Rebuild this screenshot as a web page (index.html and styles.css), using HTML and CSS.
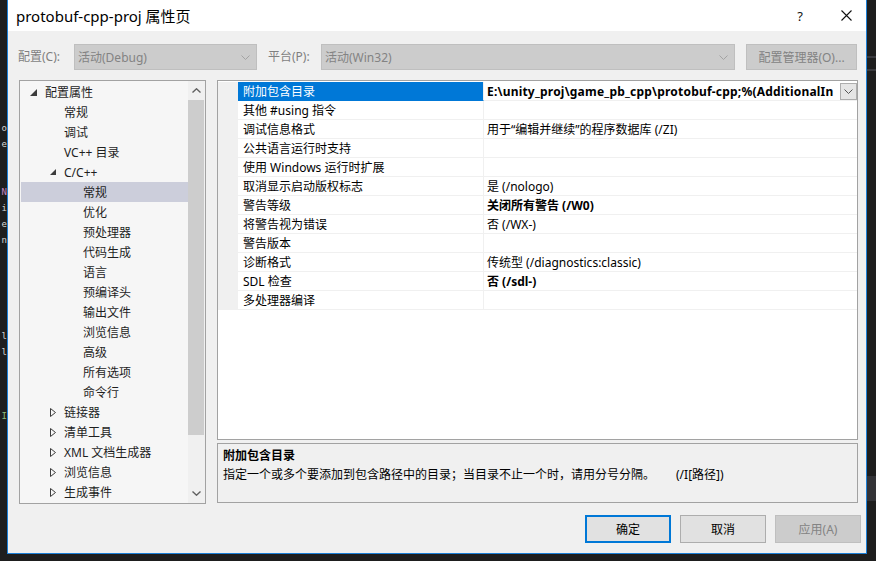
FILE: index.html
```html
<!DOCTYPE html>
<html lang="zh-CN">
<head>
<meta charset="utf-8">
<title>protobuf-cpp-proj 属性页</title>
<link rel="stylesheet" href="styles.css">
</head>
<body>
<div class="desk">
  <div class="code-strip">
    <div class="cl"></div><div class="cl"></div><div class="cl"></div><div class="cl"></div>
    <div class="cl"></div><div class="cl"></div><div class="cl"></div>
    <div class="cl"><span>o</span></div>
    <div class="cl"><span>e</span></div>
    <div class="cl"></div><div class="cl"></div>
    <div class="cl kw"><span>N</span></div>
    <div class="cl"><span>i</span></div>
    <div class="cl"><span>e</span></div>
    <div class="cl"><span>n</span></div>
    <div class="cl"></div><div class="cl"></div><div class="cl"></div><div class="cl"></div><div class="cl"></div>
    <div class="cl"><span>l</span></div>
    <div class="cl"><span>l</span></div>
    <div class="cl"></div><div class="cl"></div><div class="cl"></div>
    <div class="cl cm"><span>I</span></div>
  </div>

  <div class="window">
    <div class="titlebar">
      <div class="title">protobuf-cpp-proj 属性页</div>
      <div class="tb-help">?</div>
      <div class="tb-close">
        <svg width="11" height="11" viewBox="0 0 11 11"><path d="M0.5 0.5 L10.5 10.5 M10.5 0.5 L0.5 10.5" stroke="#111" stroke-width="1.1" fill="none"/></svg>
      </div>
    </div>

    <div class="client">
      <div class="toolbar">
        <div class="lbl lbl1">配置(C):</div>
        <div class="combo combo1"><span>活动(Debug)</span>
          <svg class="chev" width="9" height="5" viewBox="0 0 9 5"><path d="M0.5 0.5 L4.5 4.5 L8.5 0.5" stroke="#a3a3a3" fill="none"/></svg>
        </div>
        <div class="lbl lbl2">平台(P):</div>
        <div class="combo combo2"><span>活动(Win32)</span>
          <svg class="chev" width="9" height="5" viewBox="0 0 9 5"><path d="M0.5 0.5 L4.5 4.5 L8.5 0.5" stroke="#a3a3a3" fill="none"/></svg>
        </div>
        <div class="btn-dis cfgmgr">配置管理器(O)...</div>
      </div>

      <div class="main">
        <div class="tree">
          <div class="tree-list">
            <div class="ti l0"><span class="tw"><svg width="7" height="7" viewBox="0 0 7 7"><polygon points="7,0 7,7 0,7" fill="#3c3c3c"/></svg></span>配置属性</div>
            <div class="ti l1"><span class="tw"></span>常规</div>
            <div class="ti l1"><span class="tw"></span>调试</div>
            <div class="ti l1"><span class="tw"></span>VC++ 目录</div>
            <div class="ti l1"><span class="tw tw1"><svg width="6" height="6" viewBox="0 0 6 6"><polygon points="6,0 6,6 0,6" fill="#3c3c3c"/></svg></span>C/C++</div>
            <div class="ti l2 sel"><span class="tw"></span>常规</div>
            <div class="ti l2"><span class="tw"></span>优化</div>
            <div class="ti l2"><span class="tw"></span>预处理器</div>
            <div class="ti l2"><span class="tw"></span>代码生成</div>
            <div class="ti l2"><span class="tw"></span>语言</div>
            <div class="ti l2"><span class="tw"></span>预编译头</div>
            <div class="ti l2"><span class="tw"></span>输出文件</div>
            <div class="ti l2"><span class="tw"></span>浏览信息</div>
            <div class="ti l2"><span class="tw"></span>高级</div>
            <div class="ti l2"><span class="tw"></span>所有选项</div>
            <div class="ti l2"><span class="tw"></span>命令行</div>
            <div class="ti l1"><span class="tw tw1"><svg width="6" height="9" viewBox="0 0 6 9"><polygon points="0.5,0.5 5.5,4.5 0.5,8.5" fill="none" stroke="#3c3c3c"/></svg></span>链接器</div>
            <div class="ti l1"><span class="tw tw1"><svg width="6" height="9" viewBox="0 0 6 9"><polygon points="0.5,0.5 5.5,4.5 0.5,8.5" fill="none" stroke="#3c3c3c"/></svg></span>清单工具</div>
            <div class="ti l1"><span class="tw tw1"><svg width="6" height="9" viewBox="0 0 6 9"><polygon points="0.5,0.5 5.5,4.5 0.5,8.5" fill="none" stroke="#3c3c3c"/></svg></span>XML 文档生成器</div>
            <div class="ti l1"><span class="tw tw1"><svg width="6" height="9" viewBox="0 0 6 9"><polygon points="0.5,0.5 5.5,4.5 0.5,8.5" fill="none" stroke="#3c3c3c"/></svg></span>浏览信息</div>
            <div class="ti l1"><span class="tw tw1"><svg width="6" height="9" viewBox="0 0 6 9"><polygon points="0.5,0.5 5.5,4.5 0.5,8.5" fill="none" stroke="#3c3c3c"/></svg></span>生成事件</div>
          </div>
          <div class="vscroll">
            <div class="sarrow"><svg width="9" height="5" viewBox="0 0 9 5"><path d="M0.5 4.5 L4.5 0.8 L8.5 4.5" stroke="#606060" stroke-width="1.4" fill="none"/></svg></div>
            <div class="track"><div class="thumb"></div></div>
            <div class="sarrow"><svg width="9" height="5" viewBox="0 0 9 5"><path d="M0.5 0.5 L4.5 4.2 L8.5 0.5" stroke="#606060" stroke-width="1.4" fill="none"/></svg></div>
          </div>
        </div>

        <div class="rightcol">
          <div class="grid">
            <div class="row sel">
              <div class="gutter"></div>
              <div class="name">附加包含目录</div>
              <div class="val bold"><span class="vtext">E:\unity_proj\game_pb_cpp\protobuf-cpp;%(AdditionalIn</span>
                <span class="dd"><svg width="9" height="5" viewBox="0 0 9 5"><path d="M0.5 0.5 L4.5 4.5 L8.5 0.5" stroke="#555" fill="none"/></svg></span>
              </div>
            </div>
            <div class="row"><div class="gutter"></div><div class="name">其他 #using 指令</div><div class="val"></div></div>
            <div class="row"><div class="gutter"></div><div class="name">调试信息格式</div><div class="val">用于“编辑并继续”的程序数据库 (/ZI)</div></div>
            <div class="row"><div class="gutter"></div><div class="name">公共语言运行时支持</div><div class="val"></div></div>
            <div class="row"><div class="gutter"></div><div class="name">使用 Windows 运行时扩展</div><div class="val"></div></div>
            <div class="row"><div class="gutter"></div><div class="name">取消显示启动版权标志</div><div class="val">是 (/nologo)</div></div>
            <div class="row"><div class="gutter"></div><div class="name">警告等级</div><div class="val bold">关闭所有警告 (/W0)</div></div>
            <div class="row"><div class="gutter"></div><div class="name">将警告视为错误</div><div class="val">否 (/WX-)</div></div>
            <div class="row"><div class="gutter"></div><div class="name">警告版本</div><div class="val"></div></div>
            <div class="row"><div class="gutter"></div><div class="name">诊断格式</div><div class="val">传统型 (/diagnostics:classic)</div></div>
            <div class="row"><div class="gutter"></div><div class="name">SDL 检查</div><div class="val bold">否 (/sdl-)</div></div>
            <div class="row"><div class="gutter"></div><div class="name">多处理器编译</div><div class="val"></div></div>
          </div>
          <div class="desc">
            <div class="desc-title">附加包含目录</div>
            <div class="desc-text">指定一个或多个要添加到包含路径中的目录；当目录不止一个时，请用分号分隔。<span class="sw">(/I[路径])</span></div>
          </div>
        </div>
      </div>

      <div class="buttons">
        <div class="btn btn-ok">确定</div>
        <div class="btn">取消</div>
        <div class="btn btn-disabled">应用(A)</div>
      </div>
    </div>
  </div>

  <div class="right-strip">
    <div class="rs-line rs1"></div>
    <div class="rs-line rs2"></div>
    <div class="rs-band"></div>
  </div>
</div>
</body>
</html>
```

FILE: styles.css
```css
* { box-sizing: border-box; }

body {
  margin: 0;
  background: #1e1e1e;
  font-family: "Noto Sans", "Noto Sans CJK SC", sans-serif;
  font-size: 12px;
  color: #000;
}

.desk {
  display: flex;
  width: 876px;
  height: 561px;
  overflow: hidden;
}

/* dark editor remnants on the left */
.code-strip {
  width: 7px;
  flex: none;
  overflow: hidden;
  padding-top: 8px;
  font-family: "DejaVu Sans Mono", monospace;
  font-size: 9px;
  line-height: 16px;
  color: #d4d4d4;
}
.cl {
  height: 16px;
  display: flex;
  justify-content: flex-end;
  white-space: nowrap;
}
.cl.kw { color: #c586c0; }
.cl.cm { color: #8fbf7a; }

/* window */
.window {
  width: 860px;
  height: 554px;
  flex: none;
  border: 1px solid #1c7fd6;
  border-top: none;
  background: #f0f0f0;
  display: flex;
  flex-direction: column;
}

.titlebar {
  height: 31px;
  flex: none;
  background: #fff;
  display: flex;
  align-items: center;
}
.title {
  flex: 1;
  padding-left: 8px;
  font-size: 15px;
  color: #000;
}
.tb-help {
  width: 28px;
  text-align: center;
  font-size: 13px;
  color: #111;
}
.tb-close {
  width: 40px;
  margin-left: 12px;
  display: flex;
  justify-content: center;
  align-items: center;
}

.client {
  flex: 1;
  display: flex;
  flex-direction: column;
}

/* toolbar row */
.toolbar {
  display: flex;
  align-items: center;
  height: 26px;
  margin-top: 13px;
  padding-left: 10px;
}
.lbl {
  color: #7f7f7f;
  flex: none;
  line-height: 26px;
}
.lbl1 { width: 56px; }
.lbl2 { width: 53px; margin-left: 11px; }
.combo {
  height: 26px;
  flex: none;
  border: 1px solid #bfbfbf;
  background: #cccccc;
  color: #838383;
  display: flex;
  align-items: center;
  justify-content: space-between;
  padding: 0 6px 0 3px;
}
.combo1 { width: 183px; }
.combo2 { width: 414px; }
.btn-dis {
  height: 26px;
  border: 1px solid #bfbfbf;
  background: #cccccc;
  color: #838383;
  display: flex;
  align-items: center;
  justify-content: center;
}
.cfgmgr { width: 111px; margin-left: 11px; }

/* main */
.main {
  display: flex;
  margin-top: 10px;
  padding-left: 11px;
}

.tree {
  width: 187px;
  height: 424px;
  flex: none;
  border: 1px solid #a2a2a2;
  background: #f6f6f6;
  display: flex;
}
.tree-list {
  flex: 1;
  overflow: hidden;
  padding-top: 1px;
}
.ti {
  height: 20px;
  display: flex;
  align-items: center;
  white-space: nowrap;
  color: #1e1e1e;
  line-height: 21px;
}
.ti.l0 { padding-left: 6px; }
.ti.l1 { padding-left: 25px; }
.ti.l2 { padding-left: 44px; }
.ti.sel { background: #cccedb; margin-left: 1px; padding-left: 43px; }
.tw {
  width: 19px;
  flex: none;
  display: flex;
  align-items: center;
  padding-left: 4px;
  height: 20px;
}
.tw1 { padding-left: 5px; }

.vscroll {
  width: 17px;
  flex: none;
  display: flex;
  flex-direction: column;
  background: #f0f0f0;
}
.sarrow {
  height: 19px;
  flex: none;
  display: flex;
  align-items: center;
  justify-content: center;
}
.track {
  flex: 1;
  padding: 0 1px 49px 0;
}
.thumb {
  height: 100%;
  background: #cdcdcd;
}

.rightcol {
  margin-left: 11px;
  width: 641px;
  display: flex;
  flex-direction: column;
}
.grid {
  height: 360px;
  border: 1px solid #a2a2a2;
  background: #fff;
  padding-top: 1px;
}
.row {
  display: flex;
  height: 19px;
}
.gutter {
  width: 20px;
  flex: none;
  background: #f0f0f0;
}
.name {
  width: 246px;
  flex: none;
  padding-left: 5px;
  line-height: 20px;
  border-bottom: 1px solid #f0f0f0;
  border-right: 1px solid #f0f0f0;
  white-space: nowrap;
  overflow: hidden;
}
.row.sel .name {
  background: #0078d7;
  color: #fff;
  border-bottom-color: #0078d7;
}
.val {
  flex: 1;
  min-width: 0;
  padding-left: 3px;
  line-height: 20px;
  border-bottom: 1px solid #f0f0f0;
  white-space: nowrap;
  overflow: hidden;
  display: flex;
}
.bold { font-weight: bold; }
.vtext {
  flex: 1;
  min-width: 0;
  letter-spacing: 0.2px;
}
.dd {
  width: 17px;
  height: 17px;
  flex: none;
  align-self: flex-end;
  border: 1px solid #adadad;
  background: #e5e5e5;
  display: flex;
  align-items: center;
  justify-content: center;
}

.desc {
  margin-top: 3px;
  height: 60px;
  border: 1px solid #a2a2a2;
  background: #f0f0f0;
  padding: 2px 5px 0;
}
.desc-title {
  font-weight: bold;
  line-height: 19px;
}
.desc-text {
  line-height: 19px;
  white-space: nowrap;
}
.sw { margin-left: 21px; }

/* buttons */
.buttons {
  display: flex;
  justify-content: flex-end;
  gap: 9px;
  margin-top: 11px;
  padding-right: 5px;
}
.btn {
  width: 86px;
  height: 28px;
  border: 1px solid #adadad;
  background: #e1e1e1;
  display: flex;
  align-items: center;
  justify-content: center;
  color: #000;
}
.btn-ok {
  border: 2px solid #0078d7;
}
.btn-disabled {
  background: #cccccc;
  border-color: #bfbfbf;
  color: #838383;
}

/* dark remnants on the right */
.right-strip {
  flex: 1;
  display: flex;
  flex-direction: column;
}
.rs-line {
  height: 2px;
  background: #3a3a3e;
}
.rs1 { margin-top: 56px; }
.rs2 { margin-top: 11px; }
.rs-band {
  margin-top: 405px;
  height: 25px;
  background: #333337;
}
```
